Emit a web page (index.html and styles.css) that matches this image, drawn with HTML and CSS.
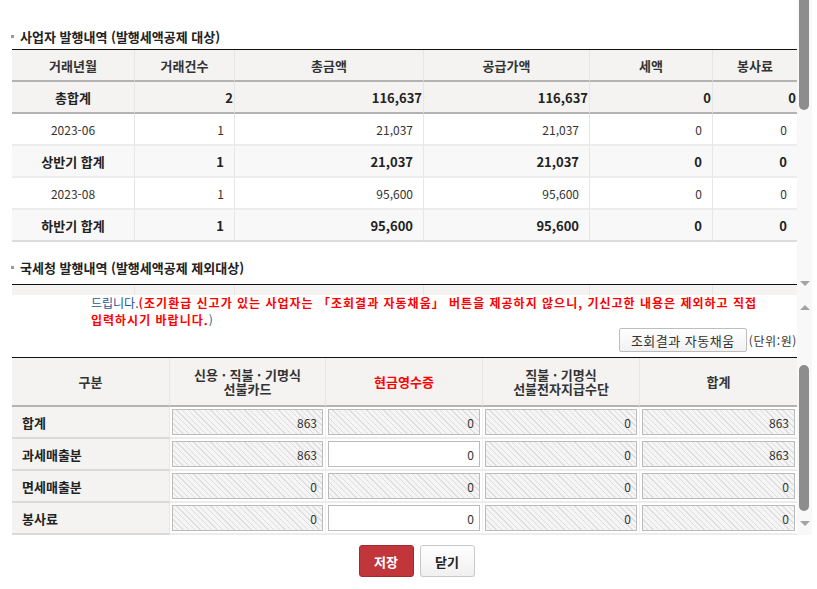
FILE: index.html
```html
<!DOCTYPE html>
<html lang="ko">

<head>
    <meta charset="utf-8">
    <title>신용카드매출전표 등 발행금액 집계표</title>
    <link rel="stylesheet" href="styles.css">
</head>

<body>
    <!-- 발행내역 조회 (위쪽 프레임) -->
    <div class="frame frame-top">
        <div class="frame-body" id="issuePane">
            <h3 class="section-title">사업자 발행내역 (발행세액공제 대상)</h3>
            <table class="grid grid-issue">
                <colgroup>
                    <col><col><col><col><col><col>
                </colgroup>
                <thead>
                    <tr>
                        <th>거래년월</th>
                        <th>거래건수</th>
                        <th>총금액</th>
                        <th>공급가액</th>
                        <th>세액</th>
                        <th>봉사료</th>
                    </tr>
                </thead>
                <tbody>
                    <tr class="row-total">
                        <th>총합계</th><td>2</td><td>116,637</td><td>116,637</td><td>0</td><td>0</td>
                    </tr>
                    <tr>
                        <td class="ym">2023-06</td><td>1</td><td>21,037</td><td>21,037</td><td>0</td><td>0</td>
                    </tr>
                    <tr class="row-sub">
                        <th>상반기 합계</th><td>1</td><td>21,037</td><td>21,037</td><td>0</td><td>0</td>
                    </tr>
                    <tr>
                        <td class="ym">2023-08</td><td>1</td><td>95,600</td><td>95,600</td><td>0</td><td>0</td>
                    </tr>
                    <tr class="row-sub">
                        <th>하반기 합계</th><td>1</td><td>95,600</td><td>95,600</td><td>0</td><td>0</td>
                    </tr>
                </tbody>
            </table>

            <h3 class="section-title">국세청 발행내역 (발행세액공제 제외대상)</h3>
            <table class="grid grid-issue grid-nts">
                <colgroup>
                    <col><col><col><col><col><col>
                </colgroup>
                <thead>
                    <tr>
                        <th>거래년월</th>
                        <th>거래건수</th>
                        <th>총금액</th>
                        <th>공급가액</th>
                        <th>세액</th>
                        <th>봉사료</th>
                    </tr>
                </thead>
                <tbody>
                    <tr class="row-total">
                        <th>총합계</th><td>0</td><td>0</td><td>0</td><td>0</td><td>0</td>
                    </tr>
                </tbody>
            </table>
        </div>
        <div class="vscroll">
            <div class="vscroll-track">
                <div class="vscroll-thumb thumb-issue"></div>
            </div>
            <div class="vscroll-btn down"></div>
        </div>
    </div>

    <!-- 집계표 입력 (아래쪽 프레임) -->
    <div class="frame frame-bottom">
        <div class="frame-body" id="formPane">
            <div class="notice">
                <div class="notice-label">※ 안내</div>
                <p class="notice-text">
                    부가가치세 신고 시 신용카드매출전표 등 발행금액 집계표를 작성하여 제출합니다.<br>
                    발행금액은 신용카드 · 직불카드 · 기명식 선불카드와 현금영수증으로 구분하여 입력합니다.<br>
                    「조회결과 자동채움」 버튼을 누르면 카드사 및 국세청에 수집된 발행내역을 조회하여<br>
                    해당 과세기간의 금액을 각 항목에 자동으로 채워<br>
                    드립니다.<strong class="warn">(조기환급 신고가 있는 사업자는 「조회결과 자동채움」 버튼을 제공하지 않으니, 기신고한 내용은 제외하고 직접<br>
                    입력하시기 바랍니다.</strong>)
                </p>
            </div>
            <div class="tools">
                <button type="button" class="btn-fill">조회결과 자동채움</button>
                <span class="unit">(단위:원)</span>
            </div>
            <table class="grid grid-sum">
                <colgroup>
                    <col><col><col><col><col>
                </colgroup>
                <thead>
                    <tr>
                        <th>구분</th>
                        <th>신용 · 직불 · 기명식<br>선불카드</th>
                        <th class="em">현금영수증</th>
                        <th>직불 · 기명식<br>선불전자지급수단</th>
                        <th>합계</th>
                    </tr>
                </thead>
                <tbody>
                    <tr>
                        <th>합계</th>
                        <td><input class="amt" value="863" readonly></td>
                        <td><input class="amt" value="0" readonly></td>
                        <td><input class="amt" value="0" readonly></td>
                        <td><input class="amt" value="863" readonly></td>
                    </tr>
                    <tr>
                        <th>과세매출분</th>
                        <td><input class="amt" value="863" readonly></td>
                        <td><input class="amt" value="0"></td>
                        <td><input class="amt" value="0" readonly></td>
                        <td><input class="amt" value="863" readonly></td>
                    </tr>
                    <tr>
                        <th>면세매출분</th>
                        <td><input class="amt" value="0" readonly></td>
                        <td><input class="amt" value="0" readonly></td>
                        <td><input class="amt" value="0" readonly></td>
                        <td><input class="amt" value="0" readonly></td>
                    </tr>
                    <tr>
                        <th>봉사료</th>
                        <td><input class="amt" value="0" readonly></td>
                        <td><input class="amt" value="0"></td>
                        <td><input class="amt" value="0" readonly></td>
                        <td><input class="amt" value="0" readonly></td>
                    </tr>
                </tbody>
            </table>
        </div>
        <div class="vscroll">
            <div class="vscroll-btn up"></div>
            <div class="vscroll-track">
                <div class="vscroll-thumb thumb-form"></div>
            </div>
            <div class="vscroll-btn down"></div>
        </div>
    </div>

    <div class="actions">
        <button type="button" class="btn btn-save">저장</button>
        <button type="button" class="btn btn-close">닫기</button>
    </div>

    <script>
        // 입력 프레임은 표가 보이도록 맨 아래로 내려둔다
        let formPane = document.getElementById("formPane");
        formPane.scrollTop = formPane.scrollHeight;
    </script>
</body>

</html>
```

FILE: styles.css
```css
* {
    box-sizing: border-box;
}

html,
body {
    margin: 0;
}

body {
    font-family: "Noto Sans CJK KR", "Noto Sans", sans-serif;
    font-size: 12px;
    line-height: 17px;
    color: #333;
    background: #fff;
}

/* 프레임 + 세로 스크롤바 */
.frame {
    display: flex;
    width: 812px;
}

.frame-top {
    height: 295px;
}

.frame-bottom {
    height: 240px;
}

.frame-body {
    flex: 1;
    overflow: hidden;
    padding-left: 12px;
}

#formPane {
    padding-top: 7px;
}

.vscroll {
    width: 15px;
    flex: none;
    display: flex;
    flex-direction: column;
    background: #f8f8f8;
}

.vscroll-track {
    flex: 1;
}

.vscroll-thumb {
    margin: 0 3px 0 2px;
    background: #8d8d8d;
    border-radius: 5px;
}

.thumb-issue {
    height: 110px;
    border-radius: 0 0 5px 5px;
}

.thumb-form {
    height: 146px;
    margin-top: 46px;
}

.vscroll-btn {
    height: 24px;
    display: flex;
    align-items: center;
    justify-content: center;
}

.vscroll-btn::before {
    content: "";
    border-left: 5px solid transparent;
    border-right: 5px solid transparent;
}

.vscroll-btn.up::before {
    border-bottom: 5px solid #a3a3a3;
}

.vscroll-btn.down::before {
    border-top: 5px solid #a3a3a3;
}

/* 소제목 */
.section-title {
    margin: 17px 0 7px;
    font-size: 13px;
    line-height: 18px;
    font-weight: bold;
    color: #222;
}

.section-title:first-child {
    margin: 28px 0 3px;
}

.section-title::before {
    content: "";
    display: inline-block;
    width: 3px;
    height: 3px;
    margin: 0 6px 3px -1px;
    vertical-align: middle;
    background: #999;
}

/* 표 공통 */
.grid {
    width: 785px;
    table-layout: fixed;
    border-collapse: separate;
    border-spacing: 0;
    border-top: 1px solid #111;
}

.grid th,
.grid td {
    padding: 0 10px;
    border-right: 1px solid #e6e6e6;
    border-bottom: 2px solid #ececec;
    white-space: nowrap;
}

.grid th:last-child,
.grid td:last-child {
    border-right: 0;
}

.grid thead th {
    background: #f4f3f1;
    border-bottom-color: #b3b3b3;
    font-size: 13px;
    font-weight: bold;
    color: #333;
    text-align: center;
}

/* 발행내역 표 */
.grid-issue col:nth-child(1) { width: 123px; }
.grid-issue col:nth-child(2) { width: 100px; }
.grid-issue col:nth-child(3) { width: 189px; }
.grid-issue col:nth-child(4) { width: 166px; }
.grid-issue col:nth-child(5) { width: 123px; }
.grid-issue col:nth-child(6) { width: 84px; }

.grid-issue th,
.grid-issue td {
    height: 32px;
}

.grid-nts thead th {
    height: 44px;
}

.grid-issue td {
    text-align: right;
    color: #333;
}

.grid-issue td.ym {
    text-align: center;
}

.grid-issue tbody th {
    font-size: 13px;
    font-weight: bold;
    color: #222;
    text-align: center;
}

.row-total th,
.row-total td {
    background: #f4f3f1;
    border-bottom-color: #b3b3b3;
    font-size: 13px;
    font-weight: bold;
    color: #222;
}

.row-total td {
    padding-right: 1px;
}

.row-sub th,
.row-sub td {
    background: #f8f8f8;
    font-size: 13px;
    font-weight: bold;
    color: #222;
}

.grid-issue tbody tr:last-child th,
.grid-issue tbody tr:last-child td {
    border-bottom-color: #dcdcdc;
}

/* 안내문 */
.notice {
    display: flex;
}

.notice-label {
    width: 79px;
    flex: none;
    font-weight: bold;
}

.notice-text {
    margin: 0;
    white-space: nowrap;
    color: #1b5796;
}

.warn {
    color: #f00;
    letter-spacing: 1px;
}

.tools {
    display: flex;
    justify-content: flex-end;
    align-items: center;
    gap: 2px;
    height: 24px;
    margin-bottom: 5px;
}

.btn-fill {
    width: 128px;
    height: 24px;
    padding: 0;
    font-family: inherit;
    font-size: 13px;
    letter-spacing: 0.5px;
    color: #333;
    background: linear-gradient(#fff, #f1f1f1);
    border: 1px solid #bdbdbd;
    border-radius: 2px;
}

.unit {
    font-size: 12px;
    letter-spacing: 0.6px;
    color: #333;
}

/* 집계표 */
.grid-sum col:nth-child(1) { width: 158px; }
.grid-sum col:nth-child(2) { width: 156px; }
.grid-sum col:nth-child(3) { width: 157px; }
.grid-sum col:nth-child(4) { width: 157px; }
.grid-sum col:nth-child(5) { width: 157px; }

.grid-sum thead th {
    height: 49px;
    line-height: 14px;
}

.grid-sum thead th.em {
    color: #f00;
}

.grid-sum tbody th {
    height: 32px;
    background: #f4f3f1;
    font-size: 13px;
    font-weight: bold;
    color: #222;
    text-align: left;
    border-bottom-color: #dadada;
}

.grid-sum td {
    height: 32px;
    padding: 2px 2px 2px;
    border-right-color: #f0f0f0;
}

.amt {
    display: block;
    width: 100%;
    height: 26px;
    padding: 0 5px;
    font-family: inherit;
    font-size: 12px;
    color: #333;
    text-align: right;
    background: #fff;
    border: 1px solid #bbb;
    outline: 0;
}

.amt[readonly] {
    background: repeating-linear-gradient(45deg, #f5f5f5 0 3px, #dedede 3px 4px);
}

/* 하단 버튼 */
.actions {
    display: flex;
    justify-content: center;
    gap: 6px;
    padding: 10px 0 0 16px;
}

.btn {
    width: 55px;
    height: 32px;
    font-family: inherit;
    font-size: 13px;
    font-weight: bold;
    border-radius: 3px;
}

.btn-save {
    color: #fff;
    background: #c1363a;
    border: 1px solid #a52a2e;
}

.btn-close {
    color: #222;
    background: linear-gradient(#fff, #f0f0f0);
    border: 1px solid #c8c8c8;
    box-shadow: 0 1px 0 #e0e0e0;
}
```
